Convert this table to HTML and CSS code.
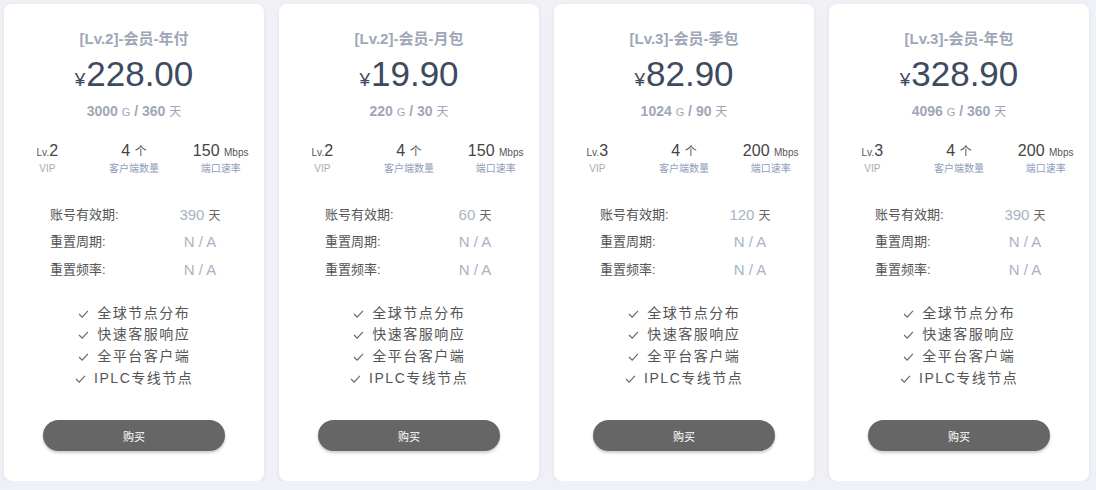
FILE: index.html
```html
<!DOCTYPE html>
<html>

<head>
    <title>套餐</title>
    <link rel="stylesheet" href="styles.css">
</head>

<body>
    <div class="plans">
        <div class="plan">
            <div class="plan_title">[Lv.2]-会员-年付</div>
            <div class="plan_price"><span class="yen">¥</span>228.00</div>
            <div class="plan_sub">3000 <small>G</small> / 360 <small class="cn">天</small></div>
            <div class="stats">
                <div class="stat"><div class="stat_val"><small>Lv.</small>2</div><div class="stat_label grey">VIP</div></div>
                <div class="stat"><div class="stat_val">4 <small class="cn">个</small></div><div class="stat_label">客户端数量</div></div>
                <div class="stat"><div class="stat_val">150 <small>Mbps</small></div><div class="stat_label">端口速率</div></div>
            </div>
            <div class="details">
                <div class="d_label">账号有效期:</div><div class="d_val">390 <small class="cn">天</small></div>
                <div class="d_label">重置周期:</div><div class="d_val">N / A</div>
                <div class="d_label">重置频率:</div><div class="d_val">N / A</div>
            </div>
            <ul class="features">
                <li><svg class="check" viewBox="0 0 12 9"><polyline points="1,4.5 4.5,8 11,1"/></svg> 全球节点分布</li>
                <li><svg class="check" viewBox="0 0 12 9"><polyline points="1,4.5 4.5,8 11,1"/></svg> 快速客服响应</li>
                <li><svg class="check" viewBox="0 0 12 9"><polyline points="1,4.5 4.5,8 11,1"/></svg> 全平台客户端</li>
                <li><svg class="check" viewBox="0 0 12 9"><polyline points="1,4.5 4.5,8 11,1"/></svg> IPLC专线节点</li>
            </ul>
            <button class="buy">购买</button>
        </div>

        <div class="plan">
            <div class="plan_title">[Lv.2]-会员-月包</div>
            <div class="plan_price"><span class="yen">¥</span>19.90</div>
            <div class="plan_sub">220 <small>G</small> / 30 <small class="cn">天</small></div>
            <div class="stats">
                <div class="stat"><div class="stat_val"><small>Lv.</small>2</div><div class="stat_label grey">VIP</div></div>
                <div class="stat"><div class="stat_val">4 <small class="cn">个</small></div><div class="stat_label">客户端数量</div></div>
                <div class="stat"><div class="stat_val">150 <small>Mbps</small></div><div class="stat_label">端口速率</div></div>
            </div>
            <div class="details">
                <div class="d_label">账号有效期:</div><div class="d_val">60 <small class="cn">天</small></div>
                <div class="d_label">重置周期:</div><div class="d_val">N / A</div>
                <div class="d_label">重置频率:</div><div class="d_val">N / A</div>
            </div>
            <ul class="features">
                <li><svg class="check" viewBox="0 0 12 9"><polyline points="1,4.5 4.5,8 11,1"/></svg> 全球节点分布</li>
                <li><svg class="check" viewBox="0 0 12 9"><polyline points="1,4.5 4.5,8 11,1"/></svg> 快速客服响应</li>
                <li><svg class="check" viewBox="0 0 12 9"><polyline points="1,4.5 4.5,8 11,1"/></svg> 全平台客户端</li>
                <li><svg class="check" viewBox="0 0 12 9"><polyline points="1,4.5 4.5,8 11,1"/></svg> IPLC专线节点</li>
            </ul>
            <button class="buy">购买</button>
        </div>

        <div class="plan">
            <div class="plan_title">[Lv.3]-会员-季包</div>
            <div class="plan_price"><span class="yen">¥</span>82.90</div>
            <div class="plan_sub">1024 <small>G</small> / 90 <small class="cn">天</small></div>
            <div class="stats">
                <div class="stat"><div class="stat_val"><small>Lv.</small>3</div><div class="stat_label grey">VIP</div></div>
                <div class="stat"><div class="stat_val">4 <small class="cn">个</small></div><div class="stat_label">客户端数量</div></div>
                <div class="stat"><div class="stat_val">200 <small>Mbps</small></div><div class="stat_label">端口速率</div></div>
            </div>
            <div class="details">
                <div class="d_label">账号有效期:</div><div class="d_val">120 <small class="cn">天</small></div>
                <div class="d_label">重置周期:</div><div class="d_val">N / A</div>
                <div class="d_label">重置频率:</div><div class="d_val">N / A</div>
            </div>
            <ul class="features">
                <li><svg class="check" viewBox="0 0 12 9"><polyline points="1,4.5 4.5,8 11,1"/></svg> 全球节点分布</li>
                <li><svg class="check" viewBox="0 0 12 9"><polyline points="1,4.5 4.5,8 11,1"/></svg> 快速客服响应</li>
                <li><svg class="check" viewBox="0 0 12 9"><polyline points="1,4.5 4.5,8 11,1"/></svg> 全平台客户端</li>
                <li><svg class="check" viewBox="0 0 12 9"><polyline points="1,4.5 4.5,8 11,1"/></svg> IPLC专线节点</li>
            </ul>
            <button class="buy">购买</button>
        </div>

        <div class="plan">
            <div class="plan_title">[Lv.3]-会员-年包</div>
            <div class="plan_price"><span class="yen">¥</span>328.90</div>
            <div class="plan_sub">4096 <small>G</small> / 360 <small class="cn">天</small></div>
            <div class="stats">
                <div class="stat"><div class="stat_val"><small>Lv.</small>3</div><div class="stat_label grey">VIP</div></div>
                <div class="stat"><div class="stat_val">4 <small class="cn">个</small></div><div class="stat_label">客户端数量</div></div>
                <div class="stat"><div class="stat_val">200 <small>Mbps</small></div><div class="stat_label">端口速率</div></div>
            </div>
            <div class="details">
                <div class="d_label">账号有效期:</div><div class="d_val">390 <small class="cn">天</small></div>
                <div class="d_label">重置周期:</div><div class="d_val">N / A</div>
                <div class="d_label">重置频率:</div><div class="d_val">N / A</div>
            </div>
            <ul class="features">
                <li><svg class="check" viewBox="0 0 12 9"><polyline points="1,4.5 4.5,8 11,1"/></svg> 全球节点分布</li>
                <li><svg class="check" viewBox="0 0 12 9"><polyline points="1,4.5 4.5,8 11,1"/></svg> 快速客服响应</li>
                <li><svg class="check" viewBox="0 0 12 9"><polyline points="1,4.5 4.5,8 11,1"/></svg> 全平台客户端</li>
                <li><svg class="check" viewBox="0 0 12 9"><polyline points="1,4.5 4.5,8 11,1"/></svg> IPLC专线节点</li>
            </ul>
            <button class="buy">购买</button>
        </div>
    </div>
</body>

</html>
```

FILE: styles.css
```css
body {
    margin: 0;
    background: #f0f1f6;
    font-family: "Liberation Sans", "Noto Sans CJK SC", sans-serif;
    color: #555;
}

.plans {
    display: flex;
    gap: 15px;
    padding: 4px 0 0 4px;
}

.plan {
    width: 260px;
    height: 477px;
    box-sizing: border-box;
    background: #fff;
    border-radius: 8px;
    box-shadow: 0 1px 4px rgba(40, 50, 90, 0.08);
    padding-top: 25px;
    display: flex;
    flex-direction: column;
    align-items: center;
}

.plan_title {
    height: 20px;
    font-size: 15px;
    font-weight: bold;
    line-height: 20px;
    color: #9ea7b8;
}

.plan_price {
    height: 40px;
    margin-top: 5px;
    font-size: 35px;
    line-height: 40px;
    color: #3d4a5f;
}

.yen {
    font-size: 19px;
    margin-right: 1px;
}

.plan_sub {
    height: 20px;
    margin-top: 7px;
    font-size: 14px;
    font-weight: bold;
    line-height: 20px;
    color: #9ea7b8;
}

.plan_sub small {
    font-size: 11px;
    font-weight: normal;
}

.plan_sub small.cn {
    font-size: 12px;
}

.stats {
    margin-top: 20px;
    width: 100%;
    display: grid;
    grid-template-columns: 1fr 1fr 1fr;
    text-align: center;
}

.stat_val {
    height: 20px;
    font-size: 16px;
    line-height: 20px;
    color: #444;
}

.stat_val small {
    font-size: 10px;
    color: #555;
}

.stat_val small.cn {
    font-size: 12px;
}

.stat_label {
    height: 14px;
    margin-top: 1px;
    font-size: 10px;
    line-height: 14px;
    color: #8f9db8;
}

.stat_label.grey {
    color: #aaa;
}

.details {
    margin-top: 25px;
    align-self: stretch;
    padding-left: 46px;
    display: grid;
    grid-template-columns: 110px 80px;
    grid-template-rows: repeat(3, 27.5px);
    align-items: center;
}

.d_label {
    height: 20px;
    line-height: 20px;
    font-size: 13px;
    color: #555;
}

.d_val {
    height: 20px;
    line-height: 20px;
    text-align: center;
    font-size: 15px;
    color: #a9b3c3;
}

.d_val small.cn {
    font-size: 12px;
    color: #666;
}

.features {
    list-style: none;
    margin: 19px 0 0;
    padding: 0;
    text-align: center;
}

.features li {
    height: 21.7px;
    font-size: 14px;
    line-height: 21.7px;
    letter-spacing: 1.5px;
    color: #555;
}

.check {
    width: 11px;
    height: 8px;
    margin-right: 3px;
    fill: none;
    stroke: #666;
    stroke-width: 1.3;
}

.buy {
    flex: none;
    margin-top: 31px;
    width: 182px;
    height: 31px;
    border: none;
    border-radius: 16px;
    background: #666;
    color: #fff;
    font-family: "Noto Sans CJK SC", sans-serif;
    font-size: 11px;
    box-shadow: 0 2px 3px rgba(0, 0, 0, 0.2);
    cursor: pointer;
}
```
